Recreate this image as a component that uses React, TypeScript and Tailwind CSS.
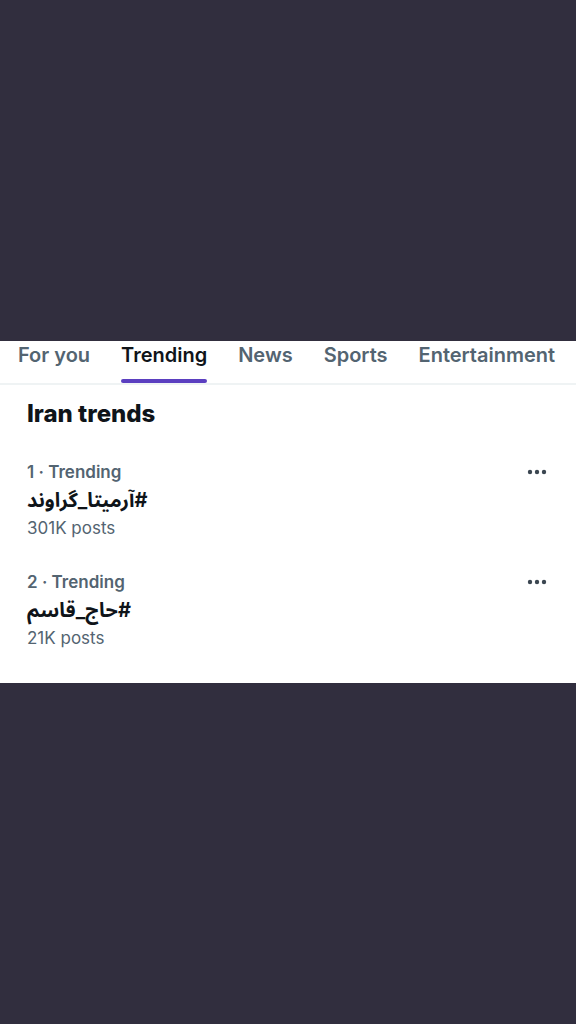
const tabs = ["For you", "Trending", "News", "Sports", "Entertainment"];

const trends = [
  { rank: 1, tag: "#آرمیتا_گراوند", posts: "301K posts" },
  { rank: 2, tag: "#حاج_قاسم", posts: "21K posts" },
];

const Dots = () => (
  <svg width="20" height="6" viewBox="0 0 20 6" className="text-[#3b4650]">
    <circle cx="3" cy="3" r="2.2" fill="currentColor" />
    <circle cx="10" cy="3" r="2.2" fill="currentColor" />
    <circle cx="17" cy="3" r="2.2" fill="currentColor" />
  </svg>
);

export default function App() {
  return (
    <div
      className="flex h-[1024px] w-[576px] flex-col bg-[#312e3e]"
      style={{ fontFamily: "Inter, 'Noto Sans', 'Noto Sans Arabic', 'DejaVu Sans', sans-serif" }}
    >
      <div className="h-[341px]" />
      <div className="flex h-[342px] flex-col bg-white">
        {/* Tabs */}
        <div className="flex h-[44px] items-start gap-[31px] border-b-2 border-[#eff3f4] pl-[18px] pt-[1px]">
          {tabs.map((t) => (
            <div
              key={t}
              className={`relative flex h-[41px] shrink-0 flex-col items-center text-[20px] font-semibold leading-[26px] ${
                t === "Trending" ? "text-[#0f1419]" : "text-[#536471]"
              }`}
            >
              <span>{t}</span>
              {t === "Trending" && (
                <span className="absolute bottom-0 left-0 h-[4px] w-full rounded-full bg-[#5b3fc0]" />
              )}
            </div>
          ))}
        </div>

        {/* Heading */}
        <div className="px-[27px] pt-[14px] text-[24px] font-extrabold leading-[30px] text-[#0f1419]">
          Iran trends
        </div>

        {/* Trend list */}
        <div className="flex flex-col pt-[29px]">
          {trends.map((tr) => (
            <div key={tr.rank} className="flex h-[110px] items-start justify-between pl-[27px] pr-[29px]">
              <div className="flex flex-col">
                <div className="text-[17px] font-semibold leading-[28px] text-[#536471]">
                  {tr.rank} · Trending
                </div>
                <div
                  dir="rtl"
                  className="text-left text-[20px] font-bold leading-[28px] text-[#0f1419]"
                >
                  {tr.tag}
                </div>
                <div className="text-[17px] leading-[28px] text-[#536471]">{tr.posts}</div>
              </div>
              <div className="pt-[11px]">
                <Dots />
              </div>
            </div>
          ))}
        </div>
      </div>
      <div className="flex-1" />
    </div>
  );
}
